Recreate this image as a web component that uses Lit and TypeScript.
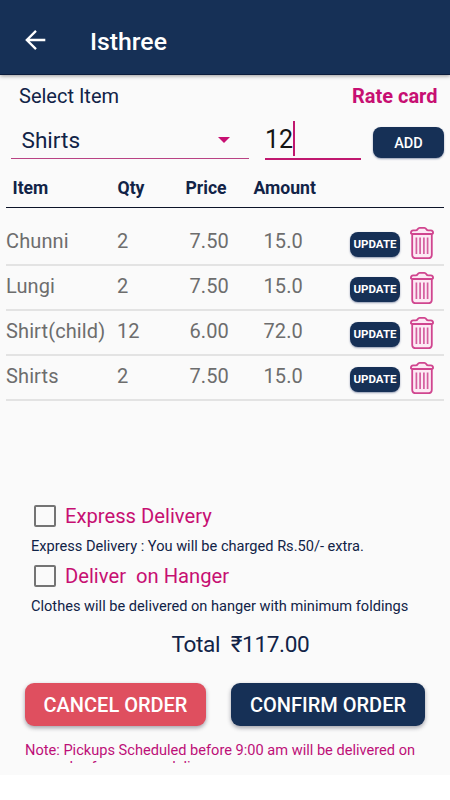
import { LitElement, html, css, svg } from "lit";
import { customElement, property } from "lit/decorators.js";

interface OrderLine {
  item: string;
  qty: string;
  price: string;
  amount: string;
}

const LINES: OrderLine[] = [
  { item: "Chunni", qty: "2", price: "7.50", amount: "15.0" },
  { item: "Lungi", qty: "2", price: "7.50", amount: "15.0" },
  { item: "Shirt(child)", qty: "12", price: "6.00", amount: "72.0" },
  { item: "Shirts", qty: "2", price: "7.50", amount: "15.0" },
];

const trashShape = svg`
  <path class="edge" d="M2.2 7 V27.6 Q2.2 31.2 5.4 31.2 H18.6 Q21.8 31.2 21.8 27.6 V7 Z" />
  <path class="edge" d="M0.9 6 Q0.9 3.4 3.2 3.4 H5.6 Q7 3.4 7.8 2 Q8.4 0.9 9.6 0.9 H14.4 Q15.6 0.9 16.2 2 Q17 3.4 18.4 3.4 H20.8 Q23.1 3.4 23.1 6 Q23.1 6.8 22.2 6.8 H1.8 Q0.9 6.8 0.9 6 Z" />
  <path class="bars" d="M6.4 10.5 V27 M10.1 10.5 V27 M13.9 10.5 V27 M17.6 10.5 V27" />`;

@customElement("order-row")
class OrderRow extends LitElement {
  @property({ attribute: false }) line!: OrderLine;

  static styles = css`
    :host {
      display: grid;
      grid-template-columns: 111px 72.5px 74px 86.5px 60px 1fr;
      box-sizing: border-box;
      height: 45px;
      border-bottom: 2px solid #e3e3e3;
      font-size: 20px;
      line-height: 40px;
      letter-spacing: 0.12px;
      color: #6d6d6d;
      white-space: nowrap;
    }
    .update {
      align-self: start;
      width: 50px;
      height: 25px;
      margin-top: 10.5px;
      padding: 0;
      border: 0;
      border-radius: 8px;
      background: #163056;
      color: #fff;
      font: 700 11.5px/25px Roboto, sans-serif;
      letter-spacing: 0;
      text-align: center;
      box-shadow: 0 1px 2px rgba(20, 40, 90, 0.45);
    }
    .trash {
      display: block;
      width: 24px;
      height: 32px;
      margin-top: 5.5px;
    }
    .edge { fill: #fdeaf4; stroke: #d0458f; stroke-width: 1.8; stroke-linejoin: round; }
    .bars { fill: none; stroke: #d45f9e; stroke-width: 1.7; }
  `;

  render() {
    return html`
      <span>${this.line.item}</span>
      <span>${this.line.qty}</span>
      <span>${this.line.price}</span>
      <span>${this.line.amount}</span>
      <button class="update">UPDATE</button>
      <svg class="trash" viewBox="0 0 24 32">${trashShape}</svg>
    `;
  }
}

@customElement("app-root")
class AppRoot extends LitElement {
  static styles = css`
    :host {
      display: block;
      width: 450px;
      height: 800px;
      overflow: hidden;
      background: #fff;
      font-family: Roboto, sans-serif;
      color: #112347;
      white-space: nowrap;
    }
    .screen {
      display: flex;
      flex-direction: column;
      height: 775px;
      background: #fafafa;
    }
    .bar {
      display: flex;
      align-items: center;
      box-sizing: border-box;
      flex: none;
      height: 75px;
      padding: 7px 0 0 25px;
      background: #163056;
      border-bottom: 1px solid #0b1c3c;
      box-shadow: 0 1px 4px rgba(0, 0, 0, 0.4);
      color: #fff;
    }
    .back { width: 21px; height: 20px; margin-top: -2px; }
    .back path { fill: none; stroke: #fff; stroke-width: 2.3; }
    .title { margin: 2px 0 0 44px; font-size: 24.8px; font-weight: 500; line-height: 30px; }
    .labels {
      display: flex;
      justify-content: space-between;
      flex: none;
      padding: 9px 12.5px 0 19px;
      font-size: 20px;
      line-height: 24px;
    }
    .rate { font-weight: 700; color: #c70f72; }
    .entry {
      display: flex;
      flex: none;
      height: 58px;
      padding-left: 11px;
    }
    .select {
      display: flex;
      align-items: center;
      justify-content: space-between;
      box-sizing: border-box;
      width: 238px;
      height: 51px;
      padding: 15px 19px 0 10.5px;
      border-bottom: 1px solid #b94284;
      font-size: 22.6px;
      line-height: 35px;
    }
    .caret {
      width: 0;
      margin-top: -1px;
      border: 6px solid transparent;
      border-top-color: #c70f72;
      border-bottom: 0;
    }
    .qty {
      display: flex;
      box-sizing: border-box;
      width: 96px;
      height: 52px;
      margin-left: 16px;
      padding-top: 12px;
      border-bottom: 2px solid #c0186f;
      font-size: 25px;
      line-height: 40px;
      color: #141414;
    }
    .cursor { width: 2px; height: 35px; margin-top: 1px; background: #c0186f; }
    .add {
      width: 71px;
      height: 31px;
      margin: 19px 0 0 12px;
      padding: 0;
      border: 0;
      border-radius: 8px;
      background: #163056;
      color: #fff;
      font: 500 14.5px/33px Roboto, sans-serif;
      text-align: center;
      box-shadow: 0 1px 2px rgba(20, 40, 90, 0.45);
    }
    .head {
      display: grid;
      grid-template-columns: 105px 68px 68px 1fr;
      box-sizing: border-box;
      flex: none;
      height: 42px;
      margin: 0 6px;
      padding-left: 6.5px;
      border-bottom: 1px solid #0c1428;
      font-size: 17.6px;
      font-weight: 700;
      line-height: 44px;
    }
    .rows { flex: none; padding: 13px 6px 0; }
    .options { flex: none; padding: 99px 0 0 31px; }
    .check {
      display: flex;
      align-items: center;
      height: 32px;
      padding-left: 3px;
      font-size: 20.2px;
      color: #c70f72;
      white-space: pre;
    }
    .box {
      box-sizing: border-box;
      width: 22px;
      height: 22px;
      margin-right: 9px;
      border: 2px solid #747474;
      border-radius: 2px;
    }
    .hint { height: 28px; font-size: 14.6px; line-height: 29px; }
    .total {
      flex: none;
      margin-top: 6px;
      padding-left: 171.5px;
      font-size: 22.6px;
      letter-spacing: -0.35px;
      line-height: 37px;
      white-space: pre;
    }
    .actions { display: flex; flex: none; gap: 25px; padding: 20px 25px 0; }
    .action {
      height: 43px;
      padding: 0;
      border: 0;
      border-radius: 9px;
      color: #fff;
      font: 500 20px/44px Roboto, sans-serif;
      text-align: center;
      box-shadow: 0 2px 4px rgba(30, 30, 50, 0.4);
    }
    .cancel { width: 181px; background: #df4f5f; }
    .confirm { width: 194px; background: #163056; }
    .note {
      flex: none;
      height: 21px;
      margin-top: 16px;
      padding-left: 25px;
      overflow: hidden;
      font-size: 14.6px;
      line-height: 16.5px;
      color: #bd1078;
    }
  `;

  render() {
    return html`
      <div class="screen">
        <header class="bar">
          <svg class="back" viewBox="0 0 21 20"><path d="M20.3 10 H1.8 M11 0.9 L1.8 10 L11 19.1" /></svg>
          <div class="title">Isthree</div>
        </header>
        <div class="labels">
          <span class="select-label">Select Item</span>
          <span class="rate">Rate card</span>
        </div>
        <div class="entry">
          <div class="select"><span>Shirts</span><span class="caret"></span></div>
          <div class="qty"><span>12</span><span class="cursor"></span></div>
          <button class="add">ADD</button>
        </div>
        <div class="head"><span>Item</span><span>Qty</span><span>Price</span><span>Amount</span></div>
        <div class="rows">${LINES.map((l) => html`<order-row .line=${l}></order-row>`)}</div>
        <div class="options">
          <div class="check"><span class="box"></span><span>Express Delivery</span></div>
          <div class="hint">Express Delivery : You will be charged Rs.50/- extra.</div>
          <div class="check"><span class="box"></span><span>Deliver  on Hanger</span></div>
          <div class="hint">Clothes will be delivered on hanger with minimum foldings</div>
        </div>
        <div class="total">Total  ₹117.00</div>
        <div class="actions">
          <button class="action cancel">CANCEL ORDER</button>
          <button class="action confirm">CONFIRM ORDER</button>
        </div>
        <div class="note">
          Note: Pickups Scheduled before 9:00 am will be delivered on<br />same day for express delivery.
        </div>
      </div>
    `;
  }
}
